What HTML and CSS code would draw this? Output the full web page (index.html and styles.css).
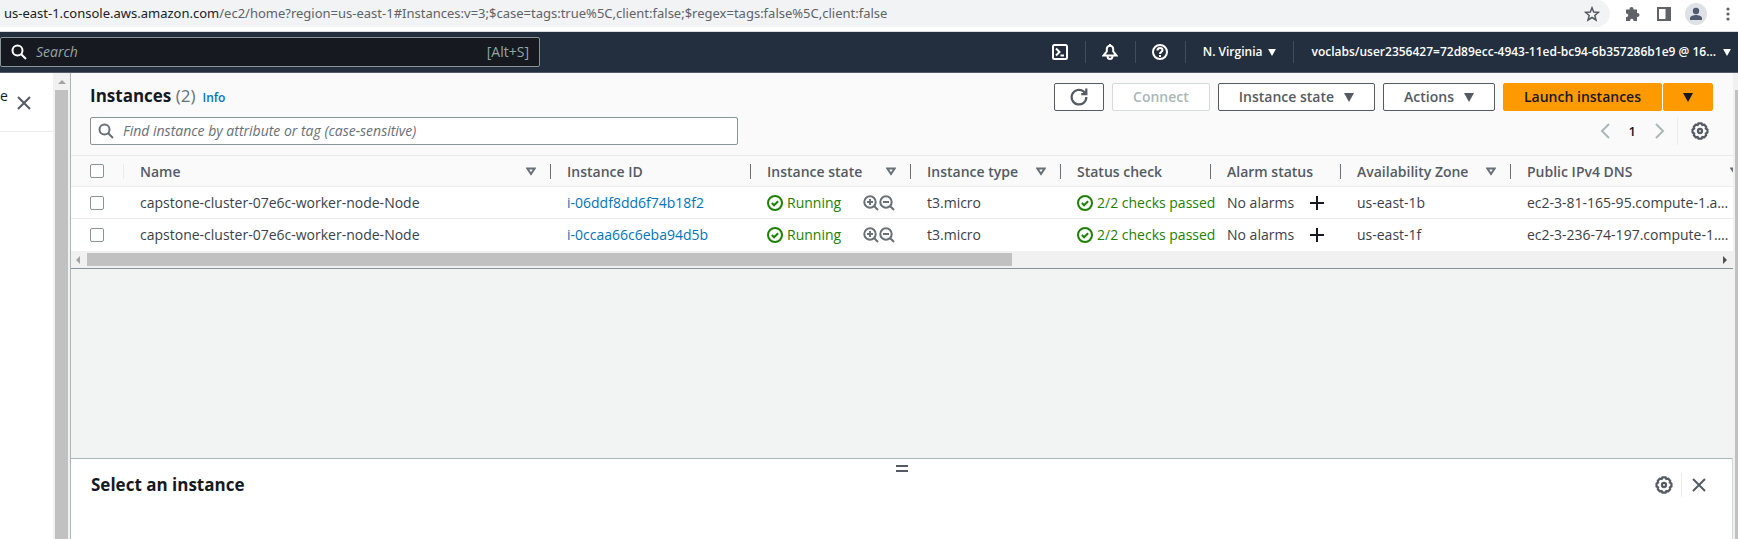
FILE: index.html
```html
<!DOCTYPE html>
<html lang="en">
<head>
<meta charset="utf-8">
<title>Instances | EC2</title>
<link rel="stylesheet" href="styles.css">
</head>
<body>
<svg class="sprite" aria-hidden="true">
  <symbol id="search" viewBox="0 0 16 16"><circle cx="6.5" cy="6.5" r="5"/><path d="M10.2 10.2 15 15"/></symbol>
  <symbol id="close" viewBox="0 0 16 16"><path d="M2 2l12 12M14 2 2 14"/></symbol>
  <symbol id="gear" viewBox="0 0 16 16"><path d="M6.600 1.300h2.800l.7 1.300 1.700-.2 1.700 1.900-.3 1.500 1.400.9v2.600l-1.400.9.3 1.500-1.700 1.900-1.700-.2-.7 1.300H6.600l-.7-1.300-1.700.2-1.700-1.900.3-1.500-1.400-.9V6.700l1.400-.9-.3-1.500 1.700-1.900 1.700.2z"/><circle cx="8" cy="8" r="1.800"/></symbol>
  <symbol id="check" viewBox="0 0 16 16"><circle cx="8" cy="8" r="7"/><path d="M4.800 8l2.300 2.300 4-4"/></symbol>
  <symbol id="zoom-in" viewBox="0 0 16 16"><circle cx="7" cy="7" r="5.700"/><path d="M11 11l4 4M4 7h6M7 4v6"/></symbol>
  <symbol id="zoom-out" viewBox="0 0 16 16"><circle cx="7" cy="7" r="5.700"/><path d="M11 11l4 4M4 7h6"/></symbol>
  <symbol id="sort" viewBox="0 0 10 9"><path d="M1.400 1.500h7.200L5 7z"/></symbol>
  <symbol id="caret" viewBox="0 0 10 9"><path d="M0 0h10L5 9z"/></symbol>
  <symbol id="plus" viewBox="0 0 16 16"><path d="M8 1v14M1 8h14"/></symbol>
</svg>

<header class="browser">
  <div class="address"><span class="url"><b>us-east-1.console.aws.amazon.com</b>/ec2/home?region=us-east-1#Instances:v=3;$case=tags:true%5C,client:false;$regex=tags:false%5C,client:false</span>
    <button class="plain" aria-label="Bookmark"><svg class="line thin grey" width="16" height="16" viewBox="0 0 16 16"><path d="M8 1.800l1.700 4.300 4.700.3-3.600 3 1.200 4.600L8 11.500l-4 2.500 1.200-4.600-3.600-3 4.700-.3z"/></svg></button>
  </div>
  <div class="tools">
    <button class="plain" aria-label="Extensions"><svg class="solid" width="16" height="16" viewBox="0 0 16 16"><path d="M2 3.500h3.500V3a2 2 0 0 1 4 0v.5H13V7h.5a2 2 0 0 1 0 4H13v4H9.500v-.5a1.700 1.700 0 0 0-3.400 0v.5H2v-4h.5a1.700 1.700 0 0 0 0-3.500H2z"/></svg></button>
    <button class="plain" aria-label="Side panel"><svg class="solid" width="14" height="14" viewBox="0 0 14 14"><path fill-rule="evenodd" d="M0 0h14v14H0zM2 2v10h6.500V2z"/></svg></button>
    <button class="plain avatar" aria-label="Profile"><svg width="14" height="14" viewBox="0 0 14 14"><circle cx="7" cy="4" r="3.200"/><path d="M1 13v-2c0-2 4-3 6-3s6 1 6 3v2z"/></svg></button>
    <button class="plain" aria-label="Menu"><svg class="solid" width="4" height="14" viewBox="0 0 4 14"><circle cx="2" cy="2" r="1.600"/><circle cx="2" cy="7" r="1.600"/><circle cx="2" cy="12" r="1.600"/></svg></button>
  </div>
</header>

<nav class="nav">
  <label class="nav-search"><svg class="line" width="16" height="16"><use href="#search"/></svg>
    <input type="search" placeholder="Search" aria-label="Search"><span>[Alt+S]</span></label>
  <div class="nav-items">
    <button class="nav-icon" aria-label="CloudShell"><svg class="line" width="16" height="16" viewBox="0 0 16 16"><rect x="1" y="1" width="14" height="14" rx="1.500"/><path d="M4 4.500 7.500 8 4 11.500M8.500 11.500H12"/></svg></button>
    <button class="nav-icon" aria-label="Notifications"><svg class="line" width="16" height="16" viewBox="0 0 16 16"><path d="M8 0v2M1.500 11.500h13L11.200 7.500V5a3.200 3.200 0 0 0-6.400 0v2.500zM5.500 12c0 4 5 4 5 0"/></svg></button>
    <button class="nav-icon" aria-label="Help"><svg class="line" width="16" height="16" viewBox="0 0 16 16"><circle cx="8" cy="8" r="7"/><path d="M5.500 6.500c0-3.400 5-3.200 5-.2C10.500 8 8 7.800 8 10M8 11v2"/></svg></button>
    <button class="nav-text">N. Virginia <svg class="fill" width="8" height="7"><use href="#caret"/></svg></button>
    <button class="nav-text">voclabs/user2356427=72d89ecc-4943-11ed-bc94-6b357286b1e9 @ 16... <svg class="fill" width="8" height="7"><use href="#caret"/></svg></button>
  </div>
</nav>

<div class="workspace">
  <aside class="side">
    <div class="side-head"><span>e</span><button class="plain" aria-label="Close navigation"><svg class="line grey" width="16" height="16"><use href="#close"/></svg></button></div>
  </aside>
  <div class="vscroll"><svg width="8" height="4" viewBox="0 0 8 4"><path d="M0 4h8L4 0z"/></svg><div class="thumb"></div></div>

  <main class="main">
    <section class="toolbar">
      <div class="bar">
        <h1>Instances <span>(2)</span></h1><a class="info" href="#">Info</a>
        <div class="actions">
          <button class="btn refresh" aria-label="Refresh"><svg class="line" width="18" height="18" viewBox="0 0 16 16"><path d="M14.500 8A6.500 6.500 0 1 1 12 3l2 2M14.500.5V5.500H10"/></svg></button>
          <button class="btn" disabled>Connect</button>
          <button class="btn">Instance state <svg class="fill" width="10" height="9"><use href="#caret"/></svg></button>
          <button class="btn">Actions <svg class="fill" width="10" height="9"><use href="#caret"/></svg></button>
          <div class="split"><button class="btn primary">Launch instances</button><button class="btn primary more" aria-label="More launch options"><svg class="fill" width="10" height="9"><use href="#caret"/></svg></button></div>
        </div>
      </div>
      <div class="bar">
        <label class="find"><svg class="line" width="16" height="16"><use href="#search"/></svg>
          <input type="search" placeholder="Find instance by attribute or tag (case-sensitive)" aria-label="Find instance"></label>
        <div class="pager">
          <button class="plain" aria-label="Previous page"><svg class="line" width="10" height="16" viewBox="0 0 10 16"><path d="M9 1 2 8l7 7"/></svg></button>
          <b>1</b>
          <button class="plain" aria-label="Next page"><svg class="line" width="10" height="16" viewBox="0 0 10 16"><path d="M1 1l7 7-7 7"/></svg></button>
          <button class="plain prefs" aria-label="Preferences"><svg class="line grey" width="18" height="18"><use href="#gear"/></svg></button>
        </div>
      </div>
    </section>

    <div class="table-wrap">
      <table class="grid">
        <colgroup><col class="c-sel"><col class="c-name"><col class="c-id"><col class="c-state"><col class="c-type"><col class="c-check"><col class="c-alarm"><col class="c-zone"><col class="c-dns"></colgroup>
        <thead><tr>
          <th class="sel"><input type="checkbox" aria-label="Select all"></th>
          <th><div class="cell">Name<button class="plain sort" aria-label="Sort by name"><svg class="line" width="10" height="9"><use href="#sort"/></svg></button></div></th>
          <th><div class="cell">Instance ID</div></th>
          <th><div class="cell">Instance state<button class="plain sort" aria-label="Sort by state"><svg class="line" width="10" height="9"><use href="#sort"/></svg></button></div></th>
          <th><div class="cell">Instance type<button class="plain sort" aria-label="Sort by type"><svg class="line" width="10" height="9"><use href="#sort"/></svg></button></div></th>
          <th><div class="cell">Status check</div></th>
          <th><div class="cell">Alarm status</div></th>
          <th><div class="cell">Availability Zone<button class="plain sort" aria-label="Sort by zone"><svg class="line" width="10" height="9"><use href="#sort"/></svg></button></div></th>
          <th><div class="cell">Public IPv4 DNS<button class="plain sort" aria-label="Sort by DNS"><svg class="line" width="10" height="9"><use href="#sort"/></svg></button></div></th>
        </tr></thead>
        <tbody>
          <tr>
            <td class="sel"><input type="checkbox" aria-label="Select i-06ddf8dd6f74b18f2"></td>
            <td>capstone-cluster-07e6c-worker-node-Node</td>
            <td><a href="#">i-06ddf8dd6f74b18f2</a></td>
            <td><div class="cell ok"><svg class="line" width="16" height="16"><use href="#check"/></svg>Running<span class="zooms"><button class="plain" aria-label="Include filter"><svg class="line" width="16" height="16"><use href="#zoom-in"/></svg></button><button class="plain" aria-label="Exclude filter"><svg class="line" width="16" height="16"><use href="#zoom-out"/></svg></button></span></div></td>
            <td>t3.micro</td>
            <td class="spill"><div class="cell ok"><svg class="line" width="16" height="16"><use href="#check"/></svg>2/2 checks passed</div></td>
            <td><div class="cell">No alarms<button class="plain add" aria-label="Add alarm"><svg class="line" width="16" height="16"><use href="#plus"/></svg></button></div></td>
            <td>us-east-1b</td>
            <td>ec2-3-81-165-95.compute-1.a…</td>
          </tr>
          <tr>
            <td class="sel"><input type="checkbox" aria-label="Select i-0ccaa66c6eba94d5b"></td>
            <td>capstone-cluster-07e6c-worker-node-Node</td>
            <td><a href="#">i-0ccaa66c6eba94d5b</a></td>
            <td><div class="cell ok"><svg class="line" width="16" height="16"><use href="#check"/></svg>Running<span class="zooms"><button class="plain" aria-label="Include filter"><svg class="line" width="16" height="16"><use href="#zoom-in"/></svg></button><button class="plain" aria-label="Exclude filter"><svg class="line" width="16" height="16"><use href="#zoom-out"/></svg></button></span></div></td>
            <td>t3.micro</td>
            <td class="spill"><div class="cell ok"><svg class="line" width="16" height="16"><use href="#check"/></svg>2/2 checks passed</div></td>
            <td><div class="cell">No alarms<button class="plain add" aria-label="Add alarm"><svg class="line" width="16" height="16"><use href="#plus"/></svg></button></div></td>
            <td>us-east-1f</td>
            <td>ec2-3-236-74-197.compute-1.…</td>
          </tr>
        </tbody>
      </table>
    </div>
    <div class="hscroll">
      <svg class="off" width="4" height="8" viewBox="0 0 4 8"><path d="M4 0v8L0 4z"/></svg>
      <div class="track"><div class="thumb"></div></div>
      <svg width="4" height="8" viewBox="0 0 4 8"><path d="M0 0v8l4-4z"/></svg>
    </div>
    <div class="empty"></div>

    <section class="details">
      <button class="plain handle" aria-label="Resize panel"></button>
      <div class="details-head">
        <h2>Select an instance</h2>
        <button class="plain" aria-label="Panel preferences"><svg class="line grey" width="18" height="18"><use href="#gear"/></svg></button>
        <button class="plain dismiss" aria-label="Close panel"><svg class="line grey" width="16" height="16"><use href="#close"/></svg></button>
      </div>
    </section>
  </main>
  <div class="page-scroll"><div class="thumb"></div></div>
</div>
</body>
</html>
```
FILE: styles.css
```css
* { box-sizing: border-box; }

body {
  margin: 0;
  height: 100vh;
  display: flex;
  flex-direction: column;
  overflow: hidden;
  background: #fff;
  color: #16191f;
  font: 14px/20px "Open Sans", "Noto Sans", sans-serif;
}

button, input { font: inherit; color: inherit; }
button { cursor: pointer; }
svg { display: block; flex: none; }
a { color: #0073bb; text-decoration: none; }
h1, h2 { margin: 0; font-size: 17px; line-height: 24px; }

.sprite { position: absolute; width: 0; height: 0; }
.line { fill: none; stroke: currentColor; stroke-width: 2; }
.thin { stroke-width: 1.5; }
.fill { fill: currentColor; }
.solid { fill: #5f6368; }
.grey { color: #545b64; }
.plain {
  display: flex;
  align-items: center;
  justify-content: center;
  padding: 0;
  border: 0;
  background: none;
}

/* Browser bar */
.browser {
  flex: none;
  display: flex;
  height: 32px;
  padding-bottom: 4px;
  border-bottom: 1px solid #dadce0;
}
.address {
  flex: 1;
  min-width: 0;
  display: flex;
  align-items: center;
  justify-content: space-between;
  padding: 0 10px 0 4px;
  border-radius: 0 14px 14px 0;
  background: #f1f3f4;
}
.url {
  overflow: hidden;
  padding-bottom: 2px;
  white-space: nowrap;
  color: #5f6368;
  font: 13px/20px "Noto Sans", sans-serif;
}
.url b { font-weight: 400; color: #202124; }
.tools {
  display: flex;
  align-items: center;
  padding: 0 8px 0 14px;
  gap: 17px;
}
.avatar {
  width: 22px;
  height: 22px;
  margin: 0 2px 0 -3px;
  border-radius: 50%;
  background: #dee1e6;
  fill: #4e5a6e;
}

/* Console navigation */
.nav {
  flex: none;
  display: flex;
  justify-content: space-between;
  align-items: center;
  height: 41px;
  border-bottom: 1px solid #545b64;
  background: #232f3e;
  color: #fff;
}
.nav-search {
  flex: 0 1 540px;
  display: flex;
  align-items: center;
  height: 30px;
  padding: 0 10px;
  border: 1px solid #879596;
  border-radius: 2px;
  background: #16191f;
}
.nav-search span, .nav-search ::placeholder { color: #95a5a6; }
input[type="search"] {
  flex: 1;
  min-width: 0;
  padding: 0;
  border: 0;
  outline: 0;
  background: none;
}
::placeholder { color: #687078; font-style: italic; opacity: 1; }
.nav-search input { margin-left: 9px; }
.nav-items { display: flex; }
.nav-items button {
  display: flex;
  align-items: center;
  height: 22px;
  border: 0;
  background: none;
}
.nav-items button + button { border-left: 1px solid #414d5c; }
.nav-icon { justify-content: center; width: 50px; padding: 0; }
.nav-text {
  gap: 6px;
  padding: 0 17px;
  font-size: 12px;
  font-weight: 600;
  white-space: nowrap;
}
.nav-text:last-child { gap: 7px; padding-right: 7px; }

/* Workspace */
.workspace { flex: 1; min-height: 0; display: flex; }
.side { flex: none; width: 53px; }
.side-head {
  display: flex;
  align-items: center;
  gap: 8px;
  height: 59px;
  padding-top: 2px;
  border-bottom: 1px solid #eaeded;
}
.side-head span { margin-bottom: 14px; }
.vscroll {
  flex: none;
  display: flex;
  flex-direction: column;
  align-items: center;
  gap: 6px;
  width: 18px;
  padding-top: 7px;
  border-right: 1px solid #aab7b8;
  background: #f1f1f1;
  fill: #a3a3a3;
}
.thumb { background: #c1c1c1; }
.vscroll .thumb { flex: 1; width: 13px; }
.page-scroll { flex: none; width: 5px; padding: 17px 0 0 2px; background: #f1f1f1; }
.page-scroll .thumb { height: 100%; }
.main {
  flex: 1;
  min-width: 0;
  display: flex;
  flex-direction: column;
  background: #f2f3f3;
}

/* Toolbar */
.toolbar {
  display: flex;
  flex-direction: column;
  gap: 6px;
  padding: 10px 20px 10px 19px;
  border-bottom: 1px solid #eaeded;
  background: #fafafa;
}
.bar { display: flex; align-items: center; height: 28px; }
h1 { padding-bottom: 2px; }
h1 span { font-weight: 400; color: #687078; }
.info { margin-left: 7px; padding-top: 2px; font-size: 12px; font-weight: 600; }
.actions { display: flex; gap: 8px; margin-left: auto; }
.btn {
  display: flex;
  align-items: center;
  justify-content: center;
  gap: 10px;
  height: 28px;
  padding: 0 20px;
  border: 1px solid #545b64;
  border-radius: 2px;
  background: #fff;
  color: #545b64;
  font-weight: 600;
  white-space: nowrap;
}
.btn:disabled { border-color: #d5dbdb; color: #aab7b8; }
.refresh { width: 50px; }
.split { display: flex; gap: 1px; }
.primary { border-color: #f90; background: #f90; color: #16191f; }
.more { width: 50px; }
.find {
  flex: 0 1 648px;
  display: flex;
  align-items: center;
  gap: 9px;
  height: 28px;
  padding: 0 7px;
  border: 1px solid #879596;
  border-radius: 2px;
  background: #fff;
  color: #687078;
}
.pager { display: flex; align-items: center; gap: 19px; margin-left: auto; color: #aab7b8; }
.pager b { color: #16191f; font-weight: 600; font-size: 13px; }
.prefs {
  width: 36px;
  height: 28px;
  padding: 0 4px 0 13px;
  margin-left: -7px;
  border-left: 1px solid #eaeded;
}

/* Instance table */
.table-wrap { overflow: hidden; background: #fff; }
.grid {
  width: 1684px;
  border-collapse: separate;
  border-spacing: 0;
  table-layout: fixed;
}
.c-sel { width: 53px; }
.c-name { width: 427px; }
.c-id { width: 200px; }
.c-state { width: 160px; }
.c-type, .c-check { width: 150px; }
.c-alarm { width: 130px; }
.c-zone { width: 170px; }
.c-dns { width: 244px; }
th, td {
  padding: 0 0 0 16px;
  overflow: hidden;
  white-space: nowrap;
  text-align: left;
}
th {
  height: 31px;
  border-bottom: 1px solid #eaeded;
  background: #fafafa;
  color: #545b64;
  font-weight: 600;
}
th .cell { line-height: 15px; border-right: 1px solid #687078; padding-right: 14px; }
td { height: 32px; color: #3b3f46; }
tbody tr:first-child td { border-bottom: 1px solid #eaeded; }
.sel { padding: 0 0 0 19px; }
th.sel {
  background: linear-gradient(#eaeded, #eaeded) 100% 50% / 1px 15px no-repeat #fafafa;
}
.sel input {
  appearance: none;
  display: block;
  width: 14px;
  height: 14px;
  margin: 0;
  border: 1px solid #879596;
  border-radius: 2px;
  background: #fff;
}
.cell { display: flex; align-items: center; padding-right: 16px; }
.sort, .add, .zooms { margin-left: auto; }
.sort { color: #687078; }
.add { color: #16191f; }
.ok { gap: 4px; color: #1d8102; }
.spill { overflow: visible; }
.spill .cell { padding-right: 0; }
.zooms { display: flex; color: #687078; }

.hscroll {
  flex: none;
  display: flex;
  align-items: center;
  justify-content: space-between;
  gap: 7px;
  height: 18px;
  padding: 0 6px 0 5px;
  border-bottom: 1px solid #879596;
  background: #f1f1f1;
  fill: #505050;
}
.off { fill: #a3a3a3; }
.track { flex: 1; }
.track .thumb { width: 56.8%; height: 13px; }
.empty { flex: 1; }

/* Detail panel */
.details {
  min-height: 81px;
  border-top: 1px solid #aab7b8;
  border-right: 1px solid #d5dbdb;
  background: #fff;
}
.handle {
  width: 12px;
  height: 7px;
  margin: 6px auto 0;
  border: solid #545b64;
  border-width: 2px 0;
}
.details-head { display: flex; align-items: center; padding: 1px 25px 0 20px; }
.details-head h2 { flex: 1; }
.dismiss {
  height: 24px;
  margin-left: 8px;
  padding-left: 9px;
  border-left: 1px solid #eaeded;
}
```
